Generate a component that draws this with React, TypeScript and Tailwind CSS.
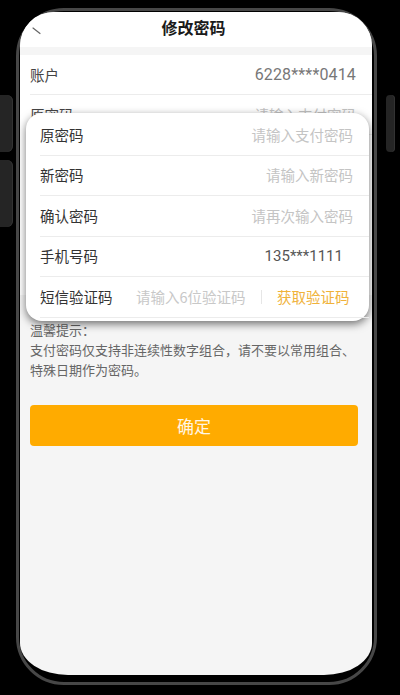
import React from 'react';

type Row = { label: string; value: string; muted?: boolean };

// visible rows of the form underneath the floating card
const baseRows: Row[] = [
  { label: '账户', value: '6228****0414' },
  { label: '原密码', value: '请输入支付密码', muted: true },
];

const cardRows: Row[] = [
  { label: '原密码', value: '请输入支付密码', muted: true },
  { label: '新密码', value: '请输入新密码', muted: true },
  { label: '确认密码', value: '请再次输入密码', muted: true },
];

function SideKey({ className }: { className: string }) {
  return <div className={`bg-[#252525] shadow-[inset_-1px_0_0_#333] ${className}`} />;
}

export default function App() {
  return (
    <div className="flex h-[695px] w-[400px] items-start overflow-hidden bg-black font-['Noto_Sans_CJK_SC',sans-serif]">
      {/* volume keys */}
      <div className="mt-[95px] flex w-[13px] flex-col gap-[8px]">
        <SideKey className="h-[57px] rounded-r-[6px]" />
        <SideKey className="h-[67px] rounded-r-[6px]" />
      </div>

      {/* phone body */}
      <div className="ml-[3px] mt-[8px] h-[677px] w-[361px] rounded-[48px] border-[3px] border-[#474747] pl-px pt-px">
        <div className="relative h-[663px] w-[352px] overflow-hidden rounded-t-[34px] rounded-b-[48px_32px] bg-[#f5f5f5]">
          {/* nav bar */}
          <div className="relative flex h-[35px] items-center justify-center bg-white pb-[6px] pr-[5px]">
            <svg className="absolute left-[12px] top-[15px]" width="10" height="8" viewBox="0 0 10 8">
              <path d="M1 1 L8 6.5" stroke="#666" strokeWidth="1.2" fill="none" strokeLinecap="round" />
            </svg>
            <span className="text-[16px] font-bold text-[#1a1a1a]">修改密码</span>
          </div>

          {/* form list (lower rows sit under the card) */}
          <div className="mt-[8px] bg-white">
            {baseRows.map((row) => (
              <div key={row.label} className="h-[40px] pl-[10px]">
                <div className="flex h-full items-center justify-between border-b border-[#ececec] pr-[16px]">
                  <span className="text-[14.5px] text-[#444]">{row.label}</span>
                  <span
                    className={
                      row.muted
                        ? 'text-[14.5px] text-[#c4c4c4]'
                        : "font-['Roboto',sans-serif] text-[16px] tracking-[0.15px] text-[#777]"
                    }
                  >
                    {row.value}
                  </span>
                </div>
              </div>
            ))}
            <div className="h-[160px]" />
          </div>

          {/* tips */}
          <div className="px-[10px] pt-[25px] text-[13px] leading-[20px] text-[#666]">
            <p>温馨提示：</p>
            <p>支付密码仅支持非连续性数字组合，请不要以常用组合、特殊日期作为密码。</p>
          </div>

          <div className="mt-[25px] pl-[10px] pr-[14px]">
            <button className="h-[41px] w-full rounded-[4px] bg-[#ffab00] text-[17px] text-[#fff6e4]">确定</button>
          </div>

          {/* floating card over the form */}
          <div className="absolute left-[6px] top-[101px] h-[208px] w-[343px] rounded-[16px] bg-white pt-[2px] shadow-[0_3px_9px_rgba(0,0,0,0.55)]">
            {cardRows.map((row) => (
              <div key={row.label} className="h-[40.5px] pl-[14px]">
                <div className="flex h-full items-center justify-between border-b border-[#ececec] pr-[16px]">
                  <span className="text-[14.5px] text-[#333]">{row.label}</span>
                  <span className="text-[14.5px] text-[#c4c4c4]">{row.value}</span>
                </div>
              </div>
            ))}
            <div className="h-[40.5px] pl-[14px]">
              <div className="flex h-full items-center justify-between border-b border-[#ececec] pr-[26px]">
                <span className="text-[14.5px] text-[#333]">手机号码</span>
                <span className="font-['Roboto',sans-serif] text-[15px] text-[#555]">135***1111</span>
              </div>
            </div>
            <div className="h-[40.5px] pl-[14px]">
              <div className="flex h-full items-center border-b border-[#ececec]">
                <span className="w-[73px] text-[14.5px] text-[#333]">短信验证码</span>
                <span className="ml-[23px] w-[112px] text-[14.5px] text-[#c8c8c8]">请输入6位验证码</span>
                <span className="ml-[13px] h-[14px] w-px bg-[#e6e6e6]" />
                <span className="ml-[15px] text-[14.5px] text-[#f0b23a]">获取验证码</span>
              </div>
            </div>
          </div>
        </div>
      </div>

      {/* power key */}
      <SideKey className="ml-[9px] mt-[95px] h-[57px] w-[9px] rounded-[4px]" />
    </div>
  );
}
